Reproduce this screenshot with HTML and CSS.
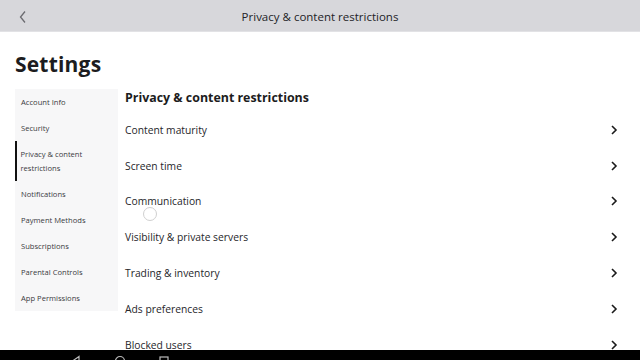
FILE: index.html
```html
<!DOCTYPE html>
<html>
<head>
<meta charset="utf-8">
<link rel="stylesheet" href="styles.css">
</head>
<body>
<header class="topbar">
  <svg class="back" width="10" height="14" viewBox="0 0 10 14"><path d="M7 1.5 L2.5 7 L7 12.5" fill="none" stroke="#6b6b70" stroke-width="1.3"/></svg>
  <div class="title">Privacy &amp; content restrictions</div>
</header>
<main class="page">
  <h1 class="heading">Settings</h1>
  <div class="layout">
    <nav class="sidebar">
      <div class="nav-item">Account Info</div>
      <div class="nav-item">Security</div>
      <div class="nav-item active">Privacy &amp; content<br>restrictions</div>
      <div class="nav-item">Notifications</div>
      <div class="nav-item">Payment Methods</div>
      <div class="nav-item">Subscriptions</div>
      <div class="nav-item">Parental Controls</div>
      <div class="nav-item">App Permissions</div>
    </nav>
    <section class="content">
      <h2 class="section-title">Privacy &amp; content restrictions</h2>
      <div class="rows">
        <div class="row"><span>Content maturity</span><svg class="chev" width="8" height="10" viewBox="0 0 8 10"><path d="M2 1 L6 5 L2 9" fill="none" stroke="#1a1a1a" stroke-width="1.6"/></svg></div>
        <div class="row"><span>Screen time</span><svg class="chev" width="8" height="10" viewBox="0 0 8 10"><path d="M2 1 L6 5 L2 9" fill="none" stroke="#1a1a1a" stroke-width="1.6"/></svg></div>
        <div class="row"><span>Communication</span><svg class="chev" width="8" height="10" viewBox="0 0 8 10"><path d="M2 1 L6 5 L2 9" fill="none" stroke="#1a1a1a" stroke-width="1.6"/></svg><span class="touch"></span></div>
        <div class="row"><span>Visibility &amp; private servers</span><svg class="chev" width="8" height="10" viewBox="0 0 8 10"><path d="M2 1 L6 5 L2 9" fill="none" stroke="#1a1a1a" stroke-width="1.6"/></svg></div>
        <div class="row"><span>Trading &amp; inventory</span><svg class="chev" width="8" height="10" viewBox="0 0 8 10"><path d="M2 1 L6 5 L2 9" fill="none" stroke="#1a1a1a" stroke-width="1.6"/></svg></div>
        <div class="row"><span>Ads preferences</span><svg class="chev" width="8" height="10" viewBox="0 0 8 10"><path d="M2 1 L6 5 L2 9" fill="none" stroke="#1a1a1a" stroke-width="1.6"/></svg></div>
        <div class="row"><span>Blocked users</span><svg class="chev" width="8" height="10" viewBox="0 0 8 10"><path d="M2 1 L6 5 L2 9" fill="none" stroke="#1a1a1a" stroke-width="1.6"/></svg></div>
      </div>
    </section>
  </div>
</main>
<footer class="sysnav">
  <svg width="12" height="12" viewBox="0 0 12 12"><path d="M9 1.5 L2.5 6 L9 10.5 Z" fill="none" stroke="#bbb" stroke-width="1.2"/></svg>
  <svg width="12" height="12" viewBox="0 0 12 12"><circle cx="6" cy="6" r="4.5" fill="none" stroke="#bbb" stroke-width="1.2"/></svg>
  <svg width="12" height="12" viewBox="0 0 12 12"><rect x="2" y="2" width="8" height="8" fill="none" stroke="#bbb" stroke-width="1.2"/></svg>
</footer>
</body>
</html>
```
FILE: styles.css
```css
html, body {
  margin: 0;
  padding: 0;
}
body {
  width: 640px;
  height: 360px;
  overflow: hidden;
  background: #ffffff;
  font-family: "Open Sans", "Noto Sans", sans-serif;
  color: #2a2a2e;
}
.topbar {
  height: 31px;
  background: #d7d7db;
  border-bottom: 1px solid #e2e2e5;
  display: flex;
  align-items: center;
  justify-content: center;
  position: relative;
}
.back {
  position: absolute;
  left: 18px;
  top: 10px;
}
.title {
  font-size: 11.5px;
  color: #232327;
  padding-top: 2px;
}
.page {
  padding: 0 0 0 15px;
}
.heading {
  margin: 18px 0 0 0;
  font-size: 21px;
  line-height: 28px;
  font-weight: 700;
  color: #1c1c20;
  letter-spacing: 0.2px;
}
.layout {
  display: flex;
  gap: 7px;
  margin-top: 11px;
  align-items: flex-start;
}
.sidebar {
  width: 103px;
  background: #f7f7f8;
  padding: 0;
  display: flex;
  flex-direction: column;
}
.nav-item {
  font-size: 7.6px;
  line-height: 14px;
  color: #3a3a3e;
  padding: 6px 0 6px 6px;
}
.nav-item.active {
  border-left: 2.5px solid #111;
  padding-left: 3.5px;
}
.content {
  flex: 1;
  padding-right: 22px;
}
.section-title {
  margin: 0;
  font-size: 12.4px;
  font-weight: 700;
  line-height: 18px;
  color: #1c1c20;
}
.rows {
  margin-top: 5px;
  display: flex;
  flex-direction: column;
}
.row {
  height: 35.8px;
  display: flex;
  align-items: center;
  justify-content: space-between;
  font-size: 10.3px;
  color: #26262a;
  position: relative;
}
.touch {
  position: absolute;
  left: 18px;
  top: 23px;
  width: 12px;
  height: 12px;
  border: 1.2px solid #d0d0d0;
  border-radius: 50%;
}
.sysnav {
  position: fixed;
  left: 0;
  right: 0;
  bottom: 0;
  height: 10px;
  background: #000;
  display: flex;
  gap: 32px;
  padding-left: 70px;
  align-items: flex-start;
  overflow: hidden;
}
.sysnav svg {
  margin-top: 5px;
}
```
